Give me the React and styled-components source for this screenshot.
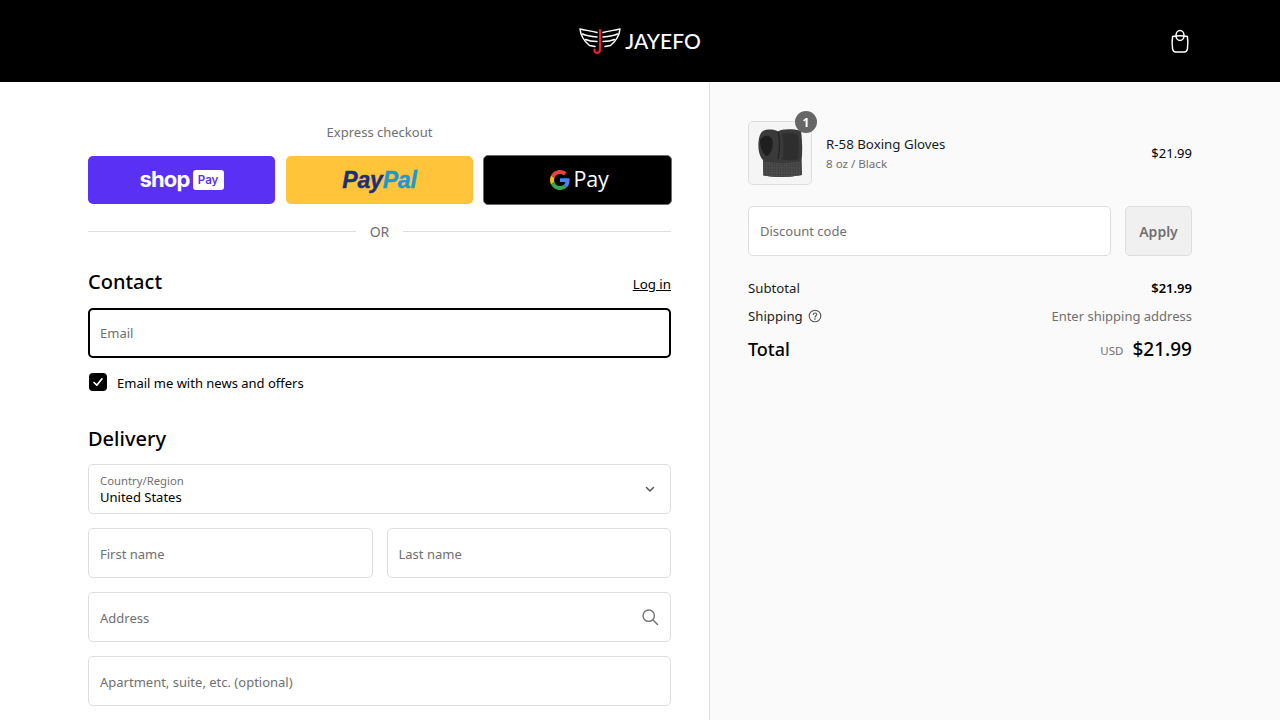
import React from "react";
import styled, { createGlobalStyle } from "styled-components";

const Global = createGlobalStyle`
  html, body { margin: 0; padding: 0; height: 100%; overflow: hidden; background: #fff; }
  * { box-sizing: border-box; }
  body { font-family: "Noto Sans", "Open Sans", "Liberation Sans", sans-serif; color: #000; font-size: 13px; }
`;

const Page = styled.div`
  height: 720px;
  display: flex;
  flex-direction: column;
  overflow: hidden;
`;
const Header = styled.header`
  flex: 0 0 82px;
  background: #000;
  display: grid;
  grid-template-columns: 1fr auto 1fr;
  align-items: center;
  padding: 0 88px;
`;
const Logo = styled.div`
  grid-column: 2;
  display: flex;
  align-items: flex-start;
  gap: 4px;
  color: #fff;
  height: 27px;
`;
const LogoText = styled.span`
  font-family: "Lato", sans-serif;
  font-size: 21px;
  font-weight: 500;
  line-height: 24px;
  margin-top: 1px;
`;
const Cart = styled.div`
  grid-column: 3;
  justify-self: end;
  display: flex;
  width: 24px;
  height: 24px;
`;
const Main = styled.main`
  flex: 1;
  display: flex;
  min-height: 0;
`;
const Left = styled.section`
  width: 710px;
  border-right: 1px solid #dedede;
  padding: 41px 38px 0 88px;
  display: flex;
  flex-direction: column;
`;
const Right = styled.aside`
  flex: 1;
  background: #fafafa;
  padding: 39px 88px 0 38px;
`;
const Express = styled.div`
  text-align: center;
  color: #707070;
  font-size: 13px;
  line-height: 18px;
  margin-bottom: 15px;
`;
const PayRow = styled.div`
  display: flex;
  gap: 11px;
  margin-right: -1px;
  height: 48px;
  align-items: center;
`;
const PayBtn = styled.div`
  width: 187px;
  height: 48px;
  border-radius: 5px;
  background: ${(p) => p.$bg};
  display: flex;
  align-items: center;
  justify-content: center;
  flex: none;
`;
const GPayBtn = styled(PayBtn)`
  width: 189px;
  height: 50px;
  border: 1px solid #6b6b6b;
  margin-left: -1px;
  gap: 4px;
  padding-left: 3px;
  color: #fff;
`;
const ShopWord = styled.span`
  font-family: "Inter", sans-serif;
  font-weight: 700;
  font-size: 22px;
  line-height: 24px;
  color: #fff;
  letter-spacing: -0.8px;
  margin-top: -3px;
`;
const ShopBadge = styled.span`
  background: #fff;
  color: #5a31f4;
  border-radius: 3px;
  width: 31px;
  height: 20px;
  margin-left: 3px;
  display: flex;
  align-items: center;
  justify-content: center;
  font-family: "Inter", sans-serif;
  font-weight: 600;
  font-size: 11.5px;
`;
const PayPalWord = styled.span`
  font-family: "Liberation Sans", sans-serif;
  font-style: italic;
  font-weight: 700;
  font-size: 23px;
  letter-spacing: -0.2px;
  -webkit-text-stroke: 0.4px ${(p) => p.$c};
  color: ${(p) => p.$c};
`;
const GPayWord = styled.span`
  font-family: "Open Sans", sans-serif;
  font-size: 21.5px;
  line-height: 26px;
  margin-top: -2px;
  color: #fff;
  letter-spacing: -0.3px;
`;
const Divider = styled.div`
  display: flex;
  align-items: center;
  gap: 14px;
  margin-top: 17px;
  height: 20px;
  color: #707070;
  font-size: 14px;
  &::before, &::after {
    content: "";
    flex: 1;
    height: 1px;
    background: #dedede;
  }
`;
const SectionHead = styled.div`
  display: flex;
  justify-content: space-between;
  align-items: center;
  margin-top: ${(p) => p.$top}px;
  height: 28px;
  margin-bottom: ${(p) => p.$bottom}px;
`;
const Heading = styled.h2`
  margin: 0;
  font-size: 20px;
  font-weight: 500;
  line-height: 28px;
`;
const Login = styled.a`
  font-size: 13.3px;
  color: #000;
  text-decoration: underline;
  margin-top: 4px;
`;
const Field = styled.div`
  height: 50px;
  flex: ${(p) => (p.$grow ? "1 1 0" : "none")};
  border: ${(p) => (p.$focus ? "2px solid #000" : "1px solid #dedede")};
  border-radius: 5px;
  background: #fff;
  display: flex;
  align-items: center;
  justify-content: space-between;
  padding: ${(p) => (p.$low ? 2 : 0)}px ${(p) => (p.$focus ? 10 : 11)}px 0;
  color: #707070;
  font-size: 13px;
`;
const FieldRow = styled.div`
  display: flex;
  gap: 14px;
`;
const Stack = styled.div`
  display: flex;
  flex-direction: column;
  gap: 14px;
`;
const CheckRow = styled.label`
  display: flex;
  align-items: center;
  gap: 10px;
  margin: 15px 0 0 1px;
  font-size: 13px;
  height: 18px;
`;
const CheckLabel = styled.span`
  margin-top: 1px;
`;
const CheckBox = styled.span`
  width: 18px;
  height: 18px;
  border-radius: 4px;
  background: #000;
  display: flex;
  align-items: center;
  justify-content: center;
`;
const FloatWrap = styled.div`
  display: flex;
  flex-direction: column;
`;
const FloatLabel = styled.span`
  font-size: 11.3px;
  line-height: 16px;
  color: #707070;
`;
const FloatValue = styled.span`
  font-size: 13px;
  line-height: 17px;
  color: #000;
`;
const ChevronSlot = styled.span`
  display: flex;
  margin-right: 3px;
`;
const SearchSlot = styled.span`
  display: flex;
  margin-top: -2px;
`;
const Item = styled.div`
  display: flex;
  align-items: center;
  height: 64px;
  margin-bottom: 21px;
`;
const Thumb = styled.div`
  position: relative;
  width: 64px;
  height: 64px;
  flex: none;
  border: 1px solid #dedede;
  border-radius: 5px;
  background: #f5f5f5;
  display: flex;
  align-items: center;
  justify-content: center;
  margin-right: 14px;
`;
const Badge = styled.span`
  position: absolute;
  top: -11px;
  right: -6px;
  width: 22px;
  height: 22px;
  border-radius: 50%;
  background: #666;
  color: #fff;
  font-size: 12px;
  font-weight: 700;
  display: flex;
  align-items: center;
  justify-content: center;
`;
const ItemInfo = styled.div`
  flex: 1;
  display: flex;
  flex-direction: column;
  padding-top: 2px;
`;
const ItemName = styled.span`
  font-size: 13.3px;
  line-height: 20px;
  margin-top: -1px;
  color: #1a1a1a;
`;
const ItemVariant = styled.span`
  font-size: 11.6px;
  line-height: 18px;
  margin-top: 1px;
  color: #707070;
`;
const ItemPrice = styled.span`
  font-size: 13px;
  color: #000;
`;
const DiscountRow = styled.div`
  display: flex;
  gap: 14px;
  margin-bottom: 22px;
`;
const ApplyBtn = styled.div`
  width: 67px;
  height: 50px;
  flex: none;
  border: 1px solid #dedede;
  border-radius: 5px;
  background: #f0f0f0;
  color: #707070;
  font-weight: 600;
  font-size: 14px;
  display: flex;
  align-items: center;
  justify-content: center;
`;
const SumRow = styled.div`
  display: flex;
  justify-content: space-between;
  align-items: center;
  height: 20px;
  margin-bottom: ${(p) => p.$gap}px;
  font-size: 13.2px;
  color: #1a1a1a;
`;
const SumLabel = styled.span`
  display: flex;
  align-items: center;
  gap: 5px;
`;
const SumStrong = styled.span`
  font-size: 13px;
  font-weight: 600;
  color: #000;
`;
const Muted = styled.span`
  font-size: 13px;
  color: #707070;
`;
const TotalRow = styled.div`
  display: flex;
  justify-content: space-between;
  align-items: center;
  height: 28px;
  margin-top: 9px;
`;
const TotalLabel = styled.span`
  font-size: 18px;
  font-weight: 500;
`;
const TotalValue = styled.span`
  display: flex;
  align-items: center;
  gap: 9px;
`;
const Usd = styled.span`
  font-size: 11.5px;
  color: #707070;
  margin-top: 3px;
`;
const Amount = styled.span`
  font-size: 19px;
  font-weight: 500;
`;

const WingsLogo = () => (
  <svg width="42" height="27" viewBox="0 0 42 27" fill="none">
    <g stroke="#fff" strokeLinecap="round" strokeLinejoin="round" strokeWidth="1.5">
      <path d="M1 1 C7 2.500 13 3 18 4.500 M1 1 C1.500 6 5 13 10.500 17.500 L16 18.500" />
      <path d="M3.500 6 C8 8 13 8.500 18 9 M6.500 11.500 C10 13 14 13.500 18 13.500" />
      <path d="M41 1 C35 2.500 29 3 24 4.500 M41 1 C40.500 6 37 13 31.500 17.500 L26 18.500" />
      <path d="M38.500 6 C34 8 29 8.500 24 9 M35.500 11.500 C32 13 28 13.500 24 13.500" />
    </g>
    <path d="M21 2 L21 21.500 C21 26 15 26 15.500 21.500" stroke="#e8202c" strokeWidth="2.200" strokeLinecap="round" />
  </svg>
);

const BagIcon = () => (
  <svg width="24" height="24" viewBox="0 0 24 24" fill="none" stroke="#fff" strokeWidth="1.500" strokeLinecap="round" strokeLinejoin="round">
    <path d="M4.600 7.500 C9 6.500 15 6.500 19.400 7.500 C20 11 20 16 19.400 20 C19.100 22 17.800 23 16.200 23 H7.800 C6.200 23 4.900 22 4.600 20 C4 16 4 11 4.600 7.500Z" />
    <ellipse cx="12" cy="6.500" rx="4" ry="5" />
  </svg>
);

const GoogleG = () => (
  <svg width="20" height="20" viewBox="0 0 48 48">
    <path fill="#EA4335" d="M24 9.500c3.540 0 6.710 1.220 9.210 3.600l6.850-6.850C35.900 2.380 30.470 0 24 0 14.620 0 6.510 5.380 2.560 13.220l7.980 6.190C12.430 13.720 17.740 9.500 24 9.500z" />
    <path fill="#4285F4" d="M46.980 24.550c0-1.570-.15-3.090-.38-4.550H24v9.020h12.940c-.58 2.960-2.260 5.480-4.780 7.180l7.730 6c4.510-4.180 7.090-10.360 7.090-17.650z" />
    <path fill="#FBBC05" d="M10.530 28.590c-.48-1.450-.76-2.990-.76-4.590s.27-3.140.76-4.590l-7.980-6.190C.92 16.460 0 20.120 0 24c0 3.880.92 7.540 2.560 10.780l7.970-6.190z" />
    <path fill="#34A853" d="M24 48c6.480 0 11.930-2.130 15.890-5.810l-7.730-6c-2.150 1.450-4.920 2.300-8.160 2.300-6.260 0-11.570-4.220-13.470-9.910l-7.980 6.190C6.510 42.620 14.620 48 24 48z" />
  </svg>
);

const Check = () => (
  <svg width="12" height="12" viewBox="0 0 12 12" fill="none" stroke="#fff" strokeWidth="1.700" strokeLinecap="round" strokeLinejoin="round">
    <path d="M2 6.500 L4.800 9.200 L10 2.800" />
  </svg>
);

const Chevron = () => (
  <svg width="12" height="12" viewBox="0 0 12 12" fill="none" stroke="#555" strokeWidth="1.500" strokeLinecap="round" strokeLinejoin="round">
    <path d="M2.500 4.500 L6 8 L9.500 4.500" />
  </svg>
);

const Search = () => (
  <svg width="18" height="18" viewBox="0 0 18 18" fill="none" stroke="#707070" strokeWidth="1.400" strokeLinecap="round">
    <circle cx="7.700" cy="7.700" r="5.700" />
    <path d="M12 12 L16.500 16.500" />
  </svg>
);

const HelpIcon = () => (
  <svg width="14" height="14" viewBox="0 0 14 14" fill="none" stroke="#555" strokeWidth="1.100" strokeLinecap="round">
    <circle cx="7" cy="7" r="5.800" />
    <path d="M5.300 5.500 C5.400 3.500 8.800 3.600 8.800 5.500 C8.800 6.700 7 6.800 7 8.200" />
    <circle cx="7" cy="10" r="0.300" />
  </svg>
);

const Glove = () => (
  <svg width="46" height="50" viewBox="0 0 46 50">
    <defs>
      <pattern id="gloveDots" width="2.500" height="2.500" patternUnits="userSpaceOnUse">
        <circle cx="1" cy="1" r="0.600" fill="#2a2a2a" />
      </pattern>
    </defs>
    <path fill="#3a3a3a" d="M6 3 C10 1 17 1 21 3.500 C24 1 38 0.500 44 3 C45.500 14 45.500 24 44.500 34 L45 47 C32 49.500 16 49.500 6.500 47.500 L6 32 C2 28 1 20 1.500 14 C2 9 3 5 6 3Z" />
    <path fill="#1f1f1f" d="M3 13 C5 7 12 6 15 11 C17 17 15 25 10 28 C6 26 3 20 3 13Z" />
    <path fill="none" stroke="#262626" strokeWidth="1.500" d="M21 3.500 C23 12 23 22 21 31" />
    <path fill="#2e2e2e" d="M25 6 C31 4 38 5 41 7 C42 16 42 24 41 31 C36 32.500 30 32.500 25 31.500 C27 24 27 14 25 6Z" />
    <path fill="#4c4c4c" d="M6 33 C18 35.500 32 35.500 44.500 33 L44.800 47 C32 49.500 16 49.500 6.500 47.500Z" />
    <path fill="url(#gloveDots)" d="M6 33 C18 35.500 32 35.500 44.500 33 L44.800 47 C32 49.500 16 49.500 6.500 47.500Z" />
  </svg>
);

export default function App() {
  return (
    <Page>
      <Global />
      <Header>
        <Logo>
          <WingsLogo />
          <LogoText>JAYEFO</LogoText>
        </Logo>
        <Cart><BagIcon /></Cart>
      </Header>
      <Main>
        <Left>
          <Express>Express checkout</Express>
          <PayRow>
            <PayBtn $bg="#5a31f4">
              <ShopWord>shop</ShopWord>
              <ShopBadge>Pay</ShopBadge>
            </PayBtn>
            <PayBtn $bg="#ffc439">
              <PayPalWord $c="#1a2f7f">Pay</PayPalWord>
              <PayPalWord $c="#179bd7">Pal</PayPalWord>
            </PayBtn>
            <GPayBtn $bg="#000">
              <GoogleG />
              <GPayWord>Pay</GPayWord>
            </GPayBtn>
          </PayRow>
          <Divider>OR</Divider>
          <SectionHead $top={27} $bottom={12}>
            <Heading>Contact</Heading>
            <Login>Log in</Login>
          </SectionHead>
          <Field $focus>Email</Field>
          <CheckRow>
            <CheckBox><Check /></CheckBox>
            <CheckLabel>Email me with news and offers</CheckLabel>
          </CheckRow>
          <SectionHead $top={34} $bottom={11}>
            <Heading>Delivery</Heading>
          </SectionHead>
          <Stack>
            <Field>
              <FloatWrap>
                <FloatLabel>Country/Region</FloatLabel>
                <FloatValue>United States</FloatValue>
              </FloatWrap>
              <ChevronSlot><Chevron /></ChevronSlot>
            </Field>
            <FieldRow>
              <Field $grow $low>First name</Field>
              <Field $grow $low>Last name</Field>
            </FieldRow>
            <Field $low>Address<SearchSlot><Search /></SearchSlot></Field>
            <Field $low>Apartment, suite, etc. (optional)</Field>
          </Stack>
        </Left>
        <Right>
          <Item>
            <Thumb>
              <Glove />
              <Badge>1</Badge>
            </Thumb>
            <ItemInfo>
              <ItemName>R-58 Boxing Gloves</ItemName>
              <ItemVariant>8 oz / Black</ItemVariant>
            </ItemInfo>
            <ItemPrice>$21.99</ItemPrice>
          </Item>
          <DiscountRow>
            <Field $grow>Discount code</Field>
            <ApplyBtn>Apply</ApplyBtn>
          </DiscountRow>
          <SumRow $gap={8}>
            <span>Subtotal</span>
            <SumStrong>$21.99</SumStrong>
          </SumRow>
          <SumRow $gap={0}>
            <SumLabel>Shipping <HelpIcon /></SumLabel>
            <Muted>Enter shipping address</Muted>
          </SumRow>
          <TotalRow>
            <TotalLabel>Total</TotalLabel>
            <TotalValue>
              <Usd>USD</Usd>
              <Amount>$21.99</Amount>
            </TotalValue>
          </TotalRow>
        </Right>
      </Main>
    </Page>
  );
}
